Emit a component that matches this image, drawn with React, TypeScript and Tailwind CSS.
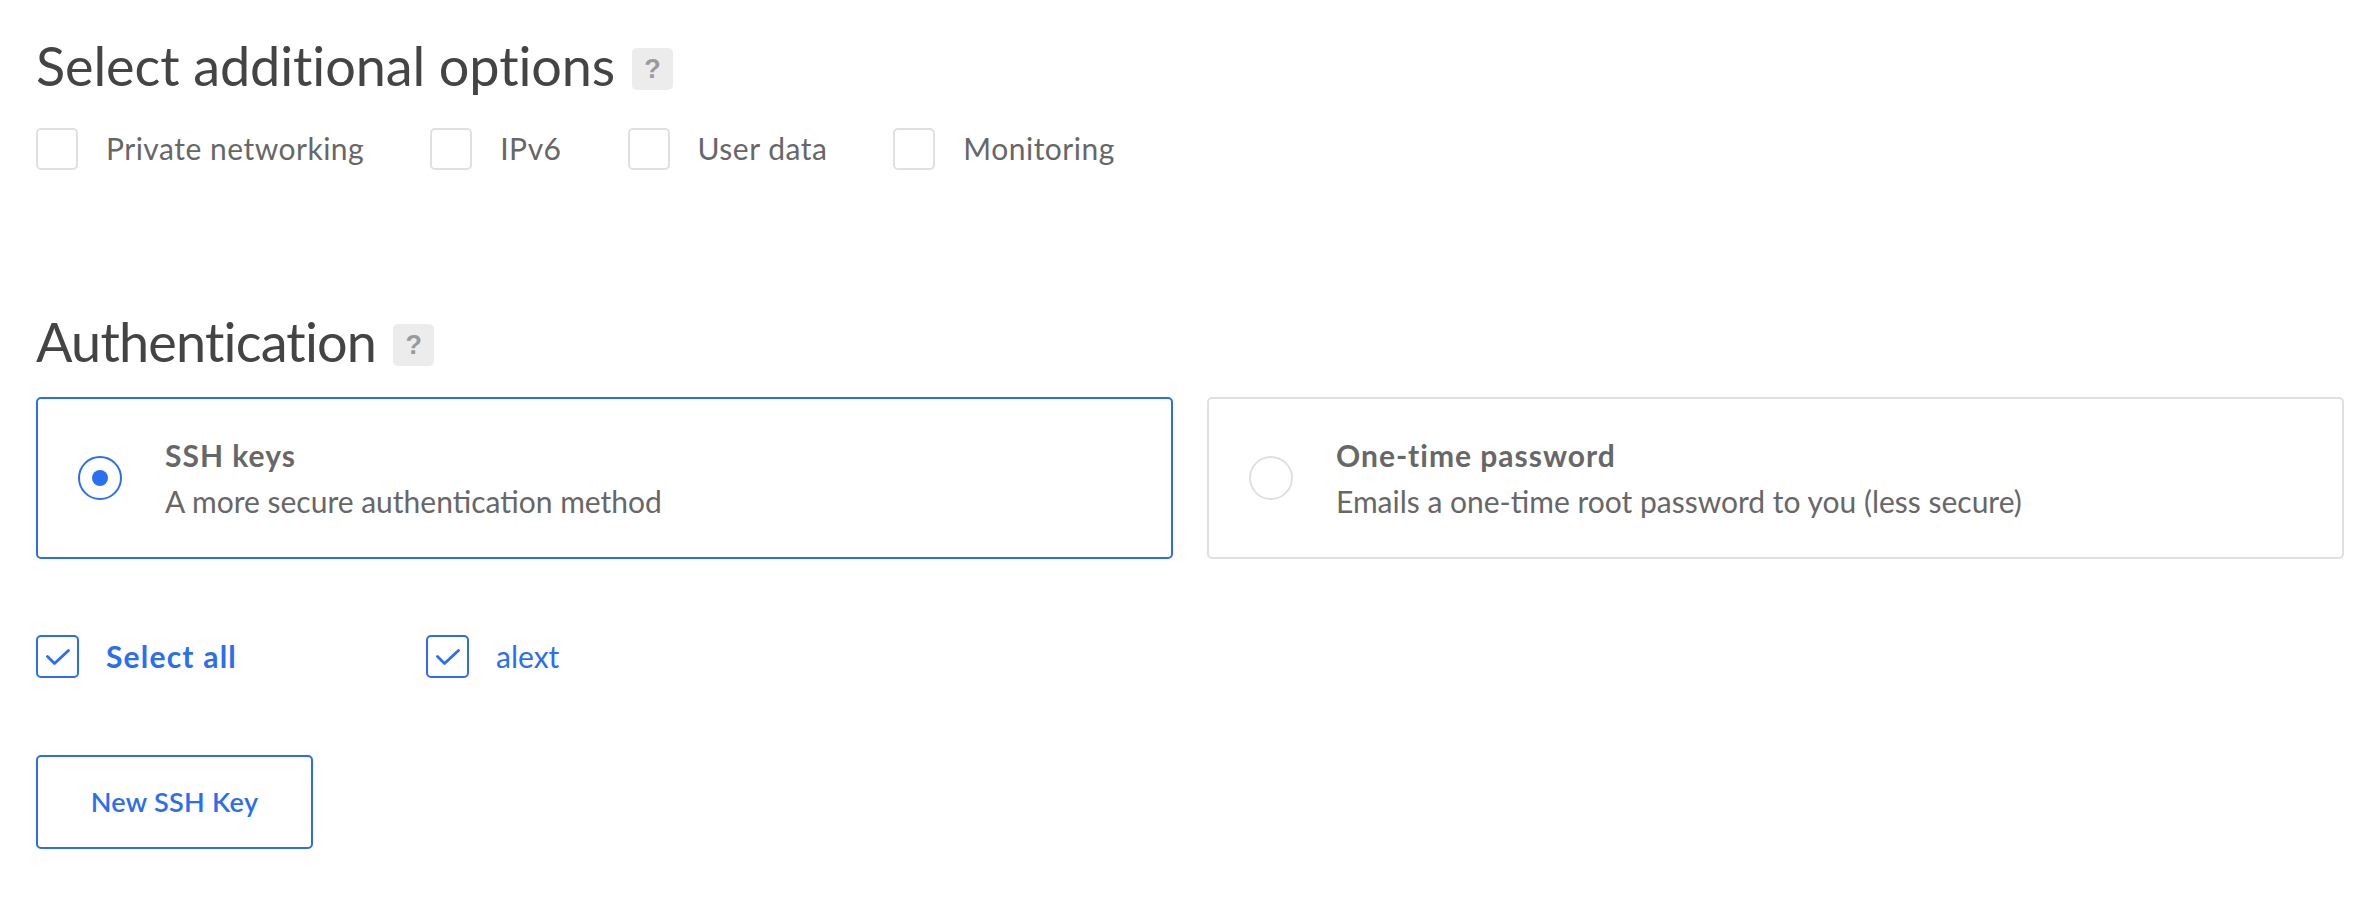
import { useState } from "react";

const BLUE = "#2b6ef0";

function HelpBadge() {
  return (
    <span className="ml-[17px] mt-[6px] flex h-[42px] w-[41px] items-center justify-center rounded-[5px] bg-[#ececec] font-['Liberation_Sans',sans-serif] text-[27px] font-bold text-[#9a9a9a]">
      ?
    </span>
  );
}

function Check() {
  return (
    <svg width="24" height="16" viewBox="0 0 24 16" fill="none">
      <path
        d="M1.5 7.5 L8.5 14.5 L22.5 1.5"
        stroke={BLUE}
        strokeWidth="2.8"
        strokeLinecap="round"
        strokeLinejoin="round"
      />
    </svg>
  );
}

function OptionBox({ label }: { label: string }) {
  return (
    <label className="flex items-center gap-[28px]">
      <span className="h-[42px] w-[42px] rounded-[5px] border-2 border-[#e0e0e0] bg-white" />
      <span className="text-[30px] tracking-[0.5px] text-[#676767]">{label}</span>
    </label>
  );
}

function AuthCard({
  title,
  desc,
  active,
  onPick,
}: {
  title: string;
  desc: string;
  active: boolean;
  onPick: () => void;
}) {
  return (
    <div
      onClick={onPick}
      className={
        active
          ? "flex h-[162px] cursor-pointer items-center rounded-[5px] border-2 border-[#2b6ef0] pl-[40px]"
          : "flex h-[162px] cursor-pointer items-center rounded-[5px] border-2 border-[#e0e0e0] pl-[40px]"
      }
    >
      <span
        className={
          active
            ? "flex h-[44px] w-[44px] shrink-0 items-center justify-center rounded-full border-2 border-[#2b6ef0]"
            : "flex h-[44px] w-[44px] shrink-0 items-center justify-center rounded-full border-2 border-[#e0e0e0]"
        }
      >
        {active && <span className="h-[16px] w-[16px] rounded-full bg-[#2b6ef0]" />}
      </span>
      <div className="ml-[43px] flex flex-col">
        <span className="text-[30px] leading-[46px] font-bold tracking-[1px] text-[#676767]">{title}</span>
        <span className="text-[30px] leading-[46px] text-[#676767]">{desc}</span>
      </div>
    </div>
  );
}

export default function App() {
  const [method, setMethod] = useState<"ssh" | "otp">("ssh");

  return (
    <div className="min-h-[898px] w-full bg-white px-[36px] pt-[33px] font-['Lato','Liberation_Sans',sans-serif]">
      <div className="flex items-center">
        <h2 className="text-[54px] leading-[66px] tracking-[-0.1px] text-[#444444]">Select additional options</h2>
        <HelpBadge />
      </div>

      <div className="mt-[27px] flex items-center gap-[66px]">
        <OptionBox label="Private networking" />
        <OptionBox label="IPv6" />
        <OptionBox label="User data" />
        <OptionBox label="Monitoring" />
      </div>

      <div className="mt-[138px] flex items-center">
        <h2 className="text-[54px] leading-[66px] tracking-[-0.8px] text-[#444444]">Authentication</h2>
        <HelpBadge />
      </div>

      <div className="mt-[22px] grid grid-cols-2 gap-[34px]">
        <AuthCard
          title="SSH keys"
          desc="A more secure authentication method"
          active={method === "ssh"}
          onPick={() => setMethod("ssh")}
        />
        <AuthCard
          title="One-time password"
          desc="Emails a one-time root password to you (less secure)"
          active={method === "otp"}
          onPick={() => setMethod("otp")}
        />
      </div>

      <div className="mt-[75px] flex items-center">
        <label className="flex w-[390px] items-center gap-[27px]">
          <span className="flex h-[43px] w-[43px] items-center justify-center rounded-[5px] border-2 border-[#2b6ef0]">
            <Check />
          </span>
          <span className="text-[30px] font-bold tracking-[1.2px] text-[#2b6ef0]">Select all</span>
        </label>
        <label className="flex items-center gap-[27px]">
          <span className="flex h-[43px] w-[43px] items-center justify-center rounded-[5px] border-2 border-[#2b6ef0]">
            <Check />
          </span>
          <span className="text-[30px] text-[#2b6ef0]">alext</span>
        </label>
      </div>

      <button
        type="button"
        className="mt-[76px] flex h-[94px] w-[277px] items-center justify-center rounded-[5px] border-2 border-[#2b6ef0] bg-white text-[27px] font-semibold tracking-[0.3px] text-[#2b6ef0]"
      >
        New SSH Key
      </button>
    </div>
  );
}
